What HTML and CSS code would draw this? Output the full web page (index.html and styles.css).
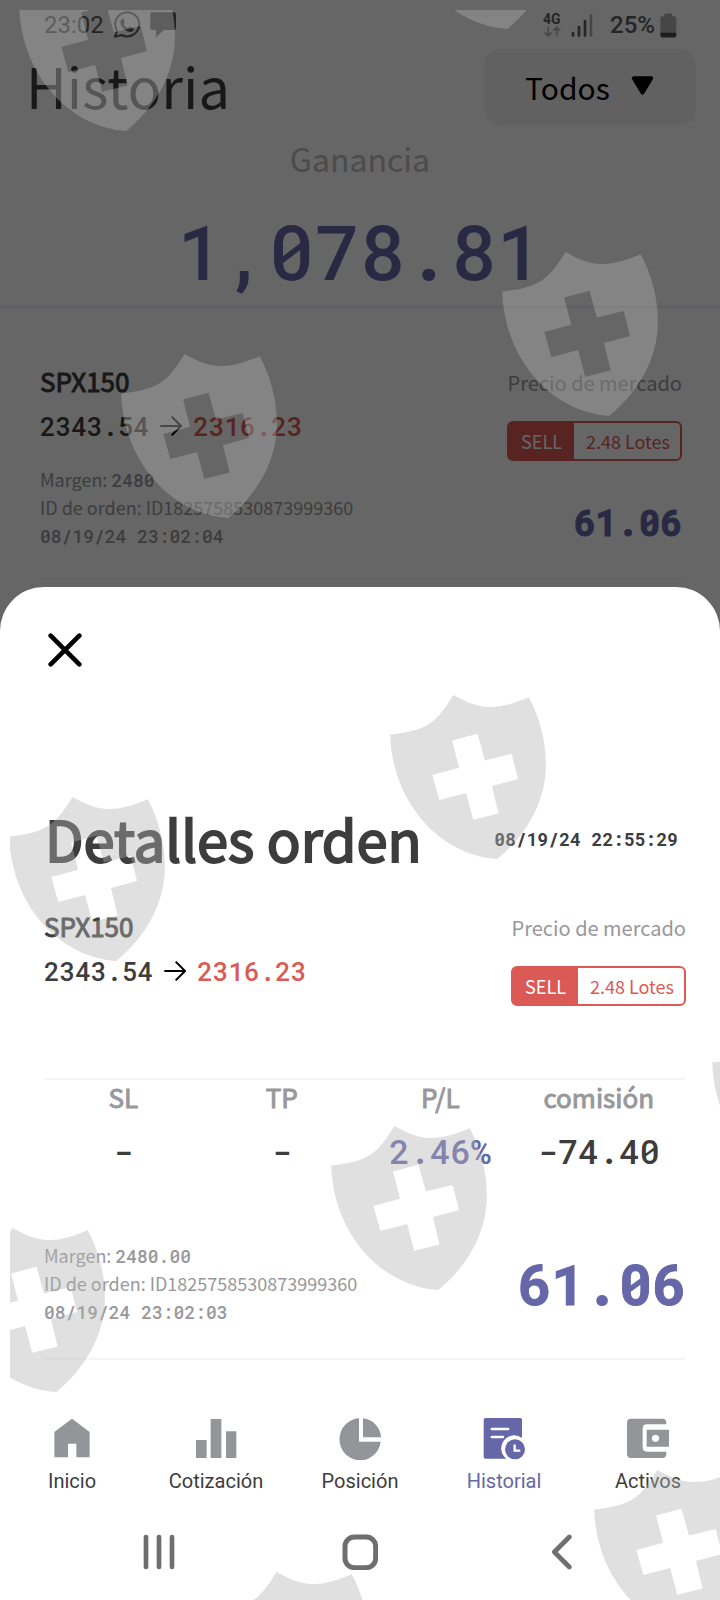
FILE: index.html
```
<!DOCTYPE html>
<html lang="es">
<head>
<meta charset="utf-8">
<meta name="viewport" content="width=device-width, initial-scale=1">
<title>Historia</title>
<link rel="stylesheet" href="styles.css">
</head>
<body>
<div class="screen">
  <section class="history">
    <div class="status">
      <div class="status-group">
        <span class="clock">23:02</span>
        <svg class="ico-chat" viewBox="342 31 84 84" aria-hidden="true"><path d="M348 108 L354 90 A36 36 0 1 1 368 103 Z" fill="none" stroke="#5c5c5c" stroke-width="6" stroke-linejoin="round"/><path d="M369 55c-9 7-5 20 7 31c12 10 22 11 28 2c1-3 0-5-3-6l-8-4c-3-1-4 1-6 4c-6-2-11-7-13-13c3-3 4-4 3-6l-3-7c-1-2-3-2-5-1z" fill="#5c5c5c"/></svg>
        <svg class="ico-msg" viewBox="453 37 78 78" aria-hidden="true"><path d="M458 38h68q5 0 5 5v43q0 5-5 5h-31l-24 22V91h-13q-4 0-4-5V43q0-5 4-5z" fill="#5c5c5c"/></svg>
      </div>
      <div class="status-group">
        <span class="net"><b>4G</b>
          <svg viewBox="548 76 56 34" aria-hidden="true"><path d="M563 78v28M552 96l11 11 11-11M589 108V80M578 91l11-11 11 11" fill="none" stroke="#b0b0b0" stroke-width="5"/></svg>
        </span>
        <svg class="ico-signal" viewBox="633 37 66 69" aria-hidden="true"><g fill="#5c5c5c"><rect x="635" y="90" width="8" height="15" rx="3"/><rect x="653" y="72" width="8" height="33" rx="3"/><rect x="671" y="54" width="8" height="51" rx="3"/></g><rect x="689" y="38" width="8" height="67" rx="3" fill="#b0b0b0"/></svg>
        <span class="charge">25%</span>
        <svg class="ico-battery" viewBox="899 35 51 74" aria-hidden="true"><path d="M912 44v-4q0-4 4-4h16q4 0 4 4v4h6q6 0 6 6v43h-48V50q0-6 6-6z" fill="#b0b0b0"/><path d="M900 93h48v9q0 6-6 6h-36q-6 0-6-6z" fill="#4c4c4c"/></svg>
      </div>
    </div>

    <header class="head">
      <h1>Historia</h1>
      <label class="filter">
        <select aria-label="Filtro"><option>Todos</option></select>
        <svg viewBox="812 229 68 58" aria-hidden="true"><path d="M820 235h52L846 278z" stroke="#000" stroke-width="11" stroke-linejoin="round"/></svg>
      </label>
    </header>

    <div class="total">
      <p class="total-label">Ganancia</p>
      <p class="total-value mono">1,078.81</p>
    </div>

    <article class="order order-past">
      <div class="order-left">
        <h2 class="symbol">SPX150</h2>
        <p class="prices mono"><span>2343.54</span><svg viewBox="0 0 66 58" aria-hidden="true"><path d="M1 29h62M35 1l28 28-28 28" fill="none" stroke="#000" stroke-width="6"/></svg><span class="down">2316.23</span></p>
        <div class="meta">
          <p>Margen: <b class="mono">2480</b></p>
          <p>ID de orden: ID1825758530873999360</p>
          <p><b class="mono">08/19/24 23:02:04</b></p>
        </div>
      </div>
      <div class="order-right">
        <p class="market">Precio de mercado</p>
        <p class="lots"><span class="side">SELL</span><span class="qty">2.48 Lotes</span></p>
        <p class="result mono">61.06</p>
      </div>
    </article>
  </section>

  <section class="sheet" role="dialog" aria-labelledby="sheet-title">
    <button class="close" type="button" aria-label="Cerrar"><svg viewBox="0 0 102 102" aria-hidden="true"><path d="M8 8l86 86M94 8L8 94" stroke="#000" stroke-width="14" stroke-linecap="round"/></svg></button>

    <div class="sheet-head">
      <h2 class="sheet-title" id="sheet-title">Detalles orden</h2>
      <time class="mono">08/19/24 22:55:29</time>
    </div>

    <article class="order">
      <div class="order-left">
        <h3 class="symbol">SPX150</h3>
        <p class="prices mono"><span>2343.54</span><svg viewBox="0 0 66 58" aria-hidden="true"><path d="M1 29h62M35 1l28 28-28 28" fill="none" stroke="#000" stroke-width="6"/></svg><span class="down">2316.23</span></p>
      </div>
      <div class="order-right">
        <p class="market">Precio de mercado</p>
        <p class="lots"><span class="side">SELL</span><span class="qty">2.48 Lotes</span></p>
      </div>
    </article>

    <div class="figures">
      <table>
        <thead><tr><th>SL</th><th>TP</th><th>P/L</th><th>comisión</th></tr></thead>
        <tbody><tr class="mono"><td>-</td><td>-</td><td class="gain">2.46%</td><td>-74.40</td></tr></tbody>
      </table>
    </div>

    <div class="summary">
      <div class="meta">
        <p>Margen: <b class="mono">2480.00</b></p>
        <p>ID de orden: ID1825758530873999360</p>
        <p><b class="mono">08/19/24 23:02:03</b></p>
      </div>
      <p class="result-big mono">61.06</p>
    </div>
  </section>

  <nav class="tabs">
    <a href="#"><svg viewBox="0 0 126 126" aria-hidden="true"><path d="M10 42L63 2l53 40v76H76V77H51v41H10z"/></svg>Inicio</a>
    <a href="#"><svg viewBox="0 0 126 126" aria-hidden="true"><path d="M3 66h32v54H3zM47 3h32v117H47zM93 40h31v80H93z"/></svg>Cotización</a>
    <a href="#"><svg viewBox="0 0 126 126" aria-hidden="true"><path d="M60 1v70h65A62 63 0 1 1 60 1zM72 1a60 60 0 0 1 54 57H72z"/></svg>Posición</a>
    <a href="#" class="active" aria-current="page"><svg viewBox="0 0 126 126" aria-hidden="true"><path d="M8 0h104q5 0 5 5v55a36 36 0 0 0-47 62H8q-6 0-6-6V6q0-6 6-6z"/><path d="M26 33h50M26 57h34" stroke="#fff" stroke-width="7" stroke-linecap="round"/><circle cx="96" cy="94" r="30"/><path d="M95 82v16h14" fill="none" stroke="#fff" stroke-width="7" stroke-linecap="round"/></svg>Historial</a>
    <a href="#"><svg viewBox="0 0 126 126" aria-hidden="true"><path d="M12 2h94q12 0 12 12v5H60q-13 0-13 13v56q0 13 13 13h58v7q0 12-12 12H12q-12 0-12-12V14Q0 2 12 2z"/><path fill-rule="evenodd" d="M59 35h67v51H59zM85 50a11 11 0 1 0 1 0z"/></svg>Activos</a>
  </nav>

  <div class="system">
    <button type="button" aria-label="Recientes"><svg viewBox="0 0 108 108" aria-hidden="true"><path d="M15 9v90M54 9v90M93 9v90" stroke-width="14"/></svg></button>
    <button type="button" aria-label="Inicio del teléfono"><svg viewBox="0 0 108 108" aria-hidden="true"><rect x="9" y="9" width="92" height="92" rx="28" stroke-width="15"/></svg></button>
    <button type="button" aria-label="Atrás"><svg viewBox="0 0 108 108" aria-hidden="true"><path d="M79 9L34 54l45 45" stroke-width="14"/></svg></button>
  </div>

  <svg class="shields" aria-hidden="true">
    <defs>
      <symbol id="shield" viewBox="0 0 465 490"><path fill-rule="evenodd" d="M0 118C112 107 139 81 189 0C272 47 317 47 414 7C447 68 467 143 465 218C462 318 412 413 320 490C142 478 5 313 0 118ZM185 136L261 116 283 196 363 176 382 251 304 272 324 354 248 373 227 293 147 314 126 239 206 217Z"/></symbol>
    </defs>
    <use href="#shield" x="9" y="-43" width="156" height="164"/>
    <use href="#shield" x="390" y="-145" width="156" height="164"/>
    <use href="#shield" x="492" y="242" width="156" height="164"/>
    <use href="#shield" x="111" y="344" width="156" height="164"/>
    <use href="#shield" x="380" y="685" width="156" height="164"/>
    <use href="#shield" x="-1" y="787" width="156" height="164"/>
    <use href="#shield" x="702" y="1013" width="156" height="164"/>
    <use href="#shield" x="321" y="1116" width="156" height="164"/>
    <use href="#shield" x="-61" y="1218" width="156" height="164"/>
    <use href="#shield" x="584" y="1460" width="156" height="164"/>
    <use href="#shield" x="203" y="1562" width="156" height="164"/>
  </svg>
</div>
</body>
</html>
```
FILE: styles.css
```
* { box-sizing: border-box; }

body, h1, h2, h3, p { margin: 0; }

body {
  font-family: "Noto Sans CJK SC", "Noto Sans", sans-serif;
  color: #3d3d3d;
  background: #fff;
}

button, select { font: inherit; color: inherit; border: 0; background: none; padding: 0; }

svg { display: block; flex: none; }

.mono { font-family: "Roboto Mono", "Liberation Mono", monospace; }

.screen { position: relative; min-height: 100vh; overflow: hidden; }

/* History page, dimmed behind the sheet */
.history { position: relative; padding-bottom: 51px; background: #fff; }
.history::after { content: ""; position: absolute; inset: 0; background: rgba(0, 0, 0, .6); }

.status {
  display: flex;
  justify-content: space-between;
  height: 49px;
  padding: 1px 43px 0 44px;
  font: 500 24px/48px Roboto, sans-serif;
  color: #5c5c5c;
}
.status-group { display: flex; align-items: center; gap: 9px; }
.clock { font-weight: 400; }
.charge { font-weight: 500; margin: 0 -4px 0 8px; }
.ico-chat { width: 28px; height: 28px; }
.ico-msg { width: 26px; height: 26px; }
.ico-signal { width: 22px; height: 23px; }
.ico-battery { width: 17px; height: 25px; }
.net { font-size: 14px; line-height: 13px; }
.net svg { width: 19px; height: 11px; }

.head {
  display: flex;
  justify-content: space-between;
  align-items: center;
  padding: 0 24px 0 26px;
  height: 76px;
}
.head h1 { padding-bottom: 4px; font-size: 56px; line-height: 72px; font-weight: 400; }

.filter {
  position: relative;
  display: flex;
  width: 212px;
  height: 76px;
  border-radius: 16px;
  background: #f2f2f2;
  color: #000;
}
.filter select { width: 100%; padding-left: 41px; font-size: 30px; appearance: none; }
.filter svg { position: absolute; right: 42px; top: 27px; width: 23px; height: 20px; }

.total { text-align: center; border-bottom: 2px solid #ebe9f8; }
.total-label { font-size: 32px; line-height: 66px; color: #bbb; }
.total-value { padding-top: 4px; font-size: 76px; line-height: 111px; font-weight: 500; color: #6667a8; }

/* Order rows */
.order { display: flex; justify-content: space-between; }
.order-past { margin: 0 38px 0 40px; padding: 52px 0 28px; border-bottom: 2px solid #f5f5f5; }
.symbol { padding-bottom: 2px; font-size: 26px; line-height: 42px; font-weight: 400; -webkit-text-stroke: 1px currentColor; }
.prices { display: flex; align-items: center; gap: 11px; font-size: 26px; line-height: 44px; font-weight: 500; }
.prices svg { width: 22px; height: 20px; }
.down { color: #db5a55; }

.meta { font-size: 18px; line-height: 28px; color: #98989b; }
.meta .mono { font-size: 18px; line-height: 1; font-weight: 500; }
.order-past .meta { padding-top: 17px; }

.order-right { display: flex; flex-direction: column; align-items: flex-end; }
.market { padding-top: 2px; font-size: 20px; line-height: 42px; color: #98989b; }
.lots {
  display: flex;
  margin-top: 17px;
  border: 2px solid #db5a55;
  border-radius: 6px;
  font-size: 18px;
  line-height: 36px;
  color: #db5a55;
}
.side { padding: 0 12px; background: #db5a55; color: #fff; }
.qty { padding: 0 10px 0 12px; }
.result { margin-top: 33px; font-size: 36px; line-height: 56px; font-weight: 700; color: #6667a8; -webkit-text-stroke: 1px currentColor; }

/* Detail sheet */
.sheet {
  position: relative;
  z-index: 1;
  margin-top: -44px;
  padding: 46px 34px 0 44px;
  border-radius: 44px 44px 0 0;
  background: #fff;
}
.close { display: block; padding: 0 4px; }
.close svg { width: 34px; height: 34px; }

.sheet-head {
  display: flex;
  justify-content: space-between;
  align-items: center;
  padding: 130px 8px 0 1px;
}
.sheet-title { padding-bottom: 2px; font-size: 56px; line-height: 82px; font-weight: 400; -webkit-text-stroke: 2px currentColor; }
.sheet-head time { font-size: 18px; font-weight: 700; }

.sheet .order { padding: 24px 0 72px; border-bottom: 2px solid #f5f5f5; }

.figures { padding-right: 8px; }
.figures table { width: 100%; table-layout: fixed; border-collapse: collapse; text-align: center; }
.figures th { padding: 0 0 2px; font-size: 26px; line-height: 34px; font-weight: 400; color: #98989b; -webkit-text-stroke: 1px currentColor; }
.figures td { padding: 7px 0 10px; font-size: 34px; line-height: 56px; font-weight: 500; }
.figures .gain { color: #6667a8; }

.summary {
  display: flex;
  justify-content: space-between;
  align-items: center;
  padding: 52px 0 33px;
  border-bottom: 2px solid #f5f5f5;
}
.result-big { font-size: 56px; line-height: 84px; font-weight: 700; color: #6667a8; -webkit-text-stroke: 1px currentColor; }

/* Bottom navigation */
.tabs { display: grid; grid-template-columns: repeat(5, 1fr); padding-top: 58px; }
.tabs a {
  display: flex;
  flex-direction: column;
  align-items: center;
  gap: 7px;
  font: 400 20px/28px Roboto, sans-serif;
  color: #3d3d3d;
  text-decoration: none;
}
.tabs svg { width: 42px; height: 42px; fill: #939598; }
.tabs .active { color: #6667a8; }
.tabs .active svg { fill: #6667a8; }

.system { display: flex; justify-content: center; gap: 165px; padding: 39px 0 30px; }
.system svg { width: 36px; height: 36px; fill: none; stroke: #6e6e6e; stroke-linecap: round; stroke-linejoin: round; }

/* Translucent shield pattern over the whole screen */
.shields {
  position: absolute;
  z-index: 2;
  inset: 10px 0 0 10px;
  width: calc(100% - 10px);
  height: calc(100% - 10px);
  overflow: hidden;
  fill: rgba(178, 178, 178, .4);
  pointer-events: none;
}
```
